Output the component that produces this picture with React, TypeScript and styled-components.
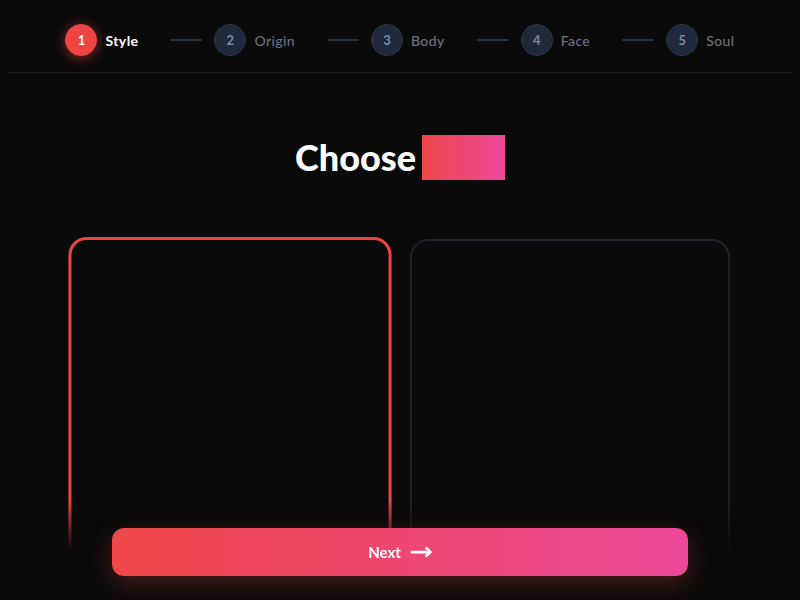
import React, { useState } from 'react';
import styled, { createGlobalStyle } from 'styled-components';
import { MoveRight } from 'lucide-react';

const GlobalStyle = createGlobalStyle`
  html, body {
    margin: 0;
    padding: 0;
    background: #0b0a0a;
    height: 100%;
    overflow: hidden;
  }
  body {
    font-family: Lato, "Open Sans", sans-serif;
    color: #fff;
  }
`;

const Page = styled.div`
  height: 100vh;
  overflow: hidden;
  background: #0b0a0a;
  position: relative;
`;

const Header = styled.header`
  padding: 24px 0 16px;
  margin: 0 8px;
  border-bottom: 1px solid #1b1b1d;
  display: flex;
  align-items: center;
  justify-content: center;
`;

const Steps = styled.ol`
  list-style: none;
  margin: 0;
  padding: 0;
  display: flex;
  align-items: center;
  gap: 12px;
`;

const Step = styled.li`
  display: flex;
  align-items: center;
  gap: 8px;
`;

const Bubble = styled.span<{ $active?: boolean }>`
  width: 32px;
  height: 32px;
  border-radius: 50%;
  box-sizing: border-box;
  display: flex;
  align-items: center;
  justify-content: center;
  font-size: 13px;
  font-weight: 700;
  background: ${(p) => (p.$active ? '#ef4444' : '#1e293b')};
  border: 1px solid ${(p) => (p.$active ? '#ef4444' : '#2b3648')};
  color: ${(p) => (p.$active ? '#fff' : '#7d8aa0')};
  box-shadow: ${(p) => (p.$active ? '0 2px 12px rgba(239, 68, 68, 0.55)' : 'none')};
`;

const Label = styled.span<{ $active?: boolean }>`
  font-size: 14px;
  font-weight: ${(p) => (p.$active ? 700 : 500)};
  letter-spacing: 0.4px;
  color: ${(p) => (p.$active ? '#fff' : '#6b7280')};
`;

const Connector = styled.span`
  width: 32px;
  height: 2px;
  margin-left: 20px;
  background: #283142;
  border-radius: 1px;
`;

const Main = styled.main`
  padding-top: 60px;
  display: flex;
  flex-direction: column;
  align-items: center;
`;

const Title = styled.h1`
  margin: 0;
  display: flex;
  align-items: center;
  gap: 6px;
  font-size: 36px;
  font-weight: 900;
  line-height: 48px;
  color: #fff;
`;

const Highlight = styled.span`
  display: inline-block;
  width: 83px;
  height: 45px;
  background: linear-gradient(90deg, #f0474b 0%, #ec4899 100%);
`;

const Grid = styled.div`
  margin-top: 58px;
  width: 660px;
  display: grid;
  grid-template-columns: 1fr 1fr;
  gap: 20px;
`;

const Card = styled.button<{ $selected?: boolean }>`
  all: unset;
  box-sizing: border-box;
  height: 400px;
  border-radius: 18px;
  background: #0b0a0a;
  border: ${(p) => (p.$selected ? '3px solid #ef4444' : '2px solid #1f2229')};
  transform: ${(p) => (p.$selected ? 'scale(1.01)' : 'none')};
  cursor: pointer;
`;

const Footer = styled.footer`
  position: fixed;
  left: 0;
  right: 0;
  bottom: 0;
  height: 100px;
  box-sizing: border-box;
  padding: 28px 0 24px;
  display: flex;
  justify-content: center;
  background: linear-gradient(to bottom, rgba(11, 10, 10, 0) 0%, #0b0a0a 50%, #0b0a0a 100%);
`;

const NextButton = styled.button`
  width: 576px;
  height: 48px;
  border: none;
  border-radius: 12px;
  display: flex;
  align-items: center;
  justify-content: center;
  gap: 9px;
  font-family: Lato, "Open Sans", sans-serif;
  font-size: 15px;
  font-weight: 700;
  color: #fff;
  background: linear-gradient(90deg, #ef4748 0%, #ec4899 100%);
  box-shadow: 0 8px 24px rgba(239, 68, 68, 0.28);
  cursor: pointer;
`;

const steps = ['Style', 'Origin', 'Body', 'Face', 'Soul'];

const App = () => {
  const [selected, setSelected] = useState(0);
  const current = 0;

  return (
    <Page>
      <GlobalStyle />
      <Header>
        <Steps>
          {steps.map((name, i) => (
            <React.Fragment key={name}>
              {i > 0 && <Connector />}
              <Step>
                <Bubble $active={i === current}>{i + 1}</Bubble>
                <Label $active={i === current}>{name}</Label>
              </Step>
            </React.Fragment>
          ))}
        </Steps>
      </Header>
      <Main>
        <Title>
          Choose <Highlight />
        </Title>
        <Grid>
          {[0, 1].map((i) => (
            <Card key={i} $selected={selected === i} onClick={() => setSelected(i)} />
          ))}
        </Grid>
      </Main>
      <Footer>
        <NextButton>
          Next
          <MoveRight size={22} strokeWidth={3} />
        </NextButton>
      </Footer>
    </Page>
  );
};

export default App;
